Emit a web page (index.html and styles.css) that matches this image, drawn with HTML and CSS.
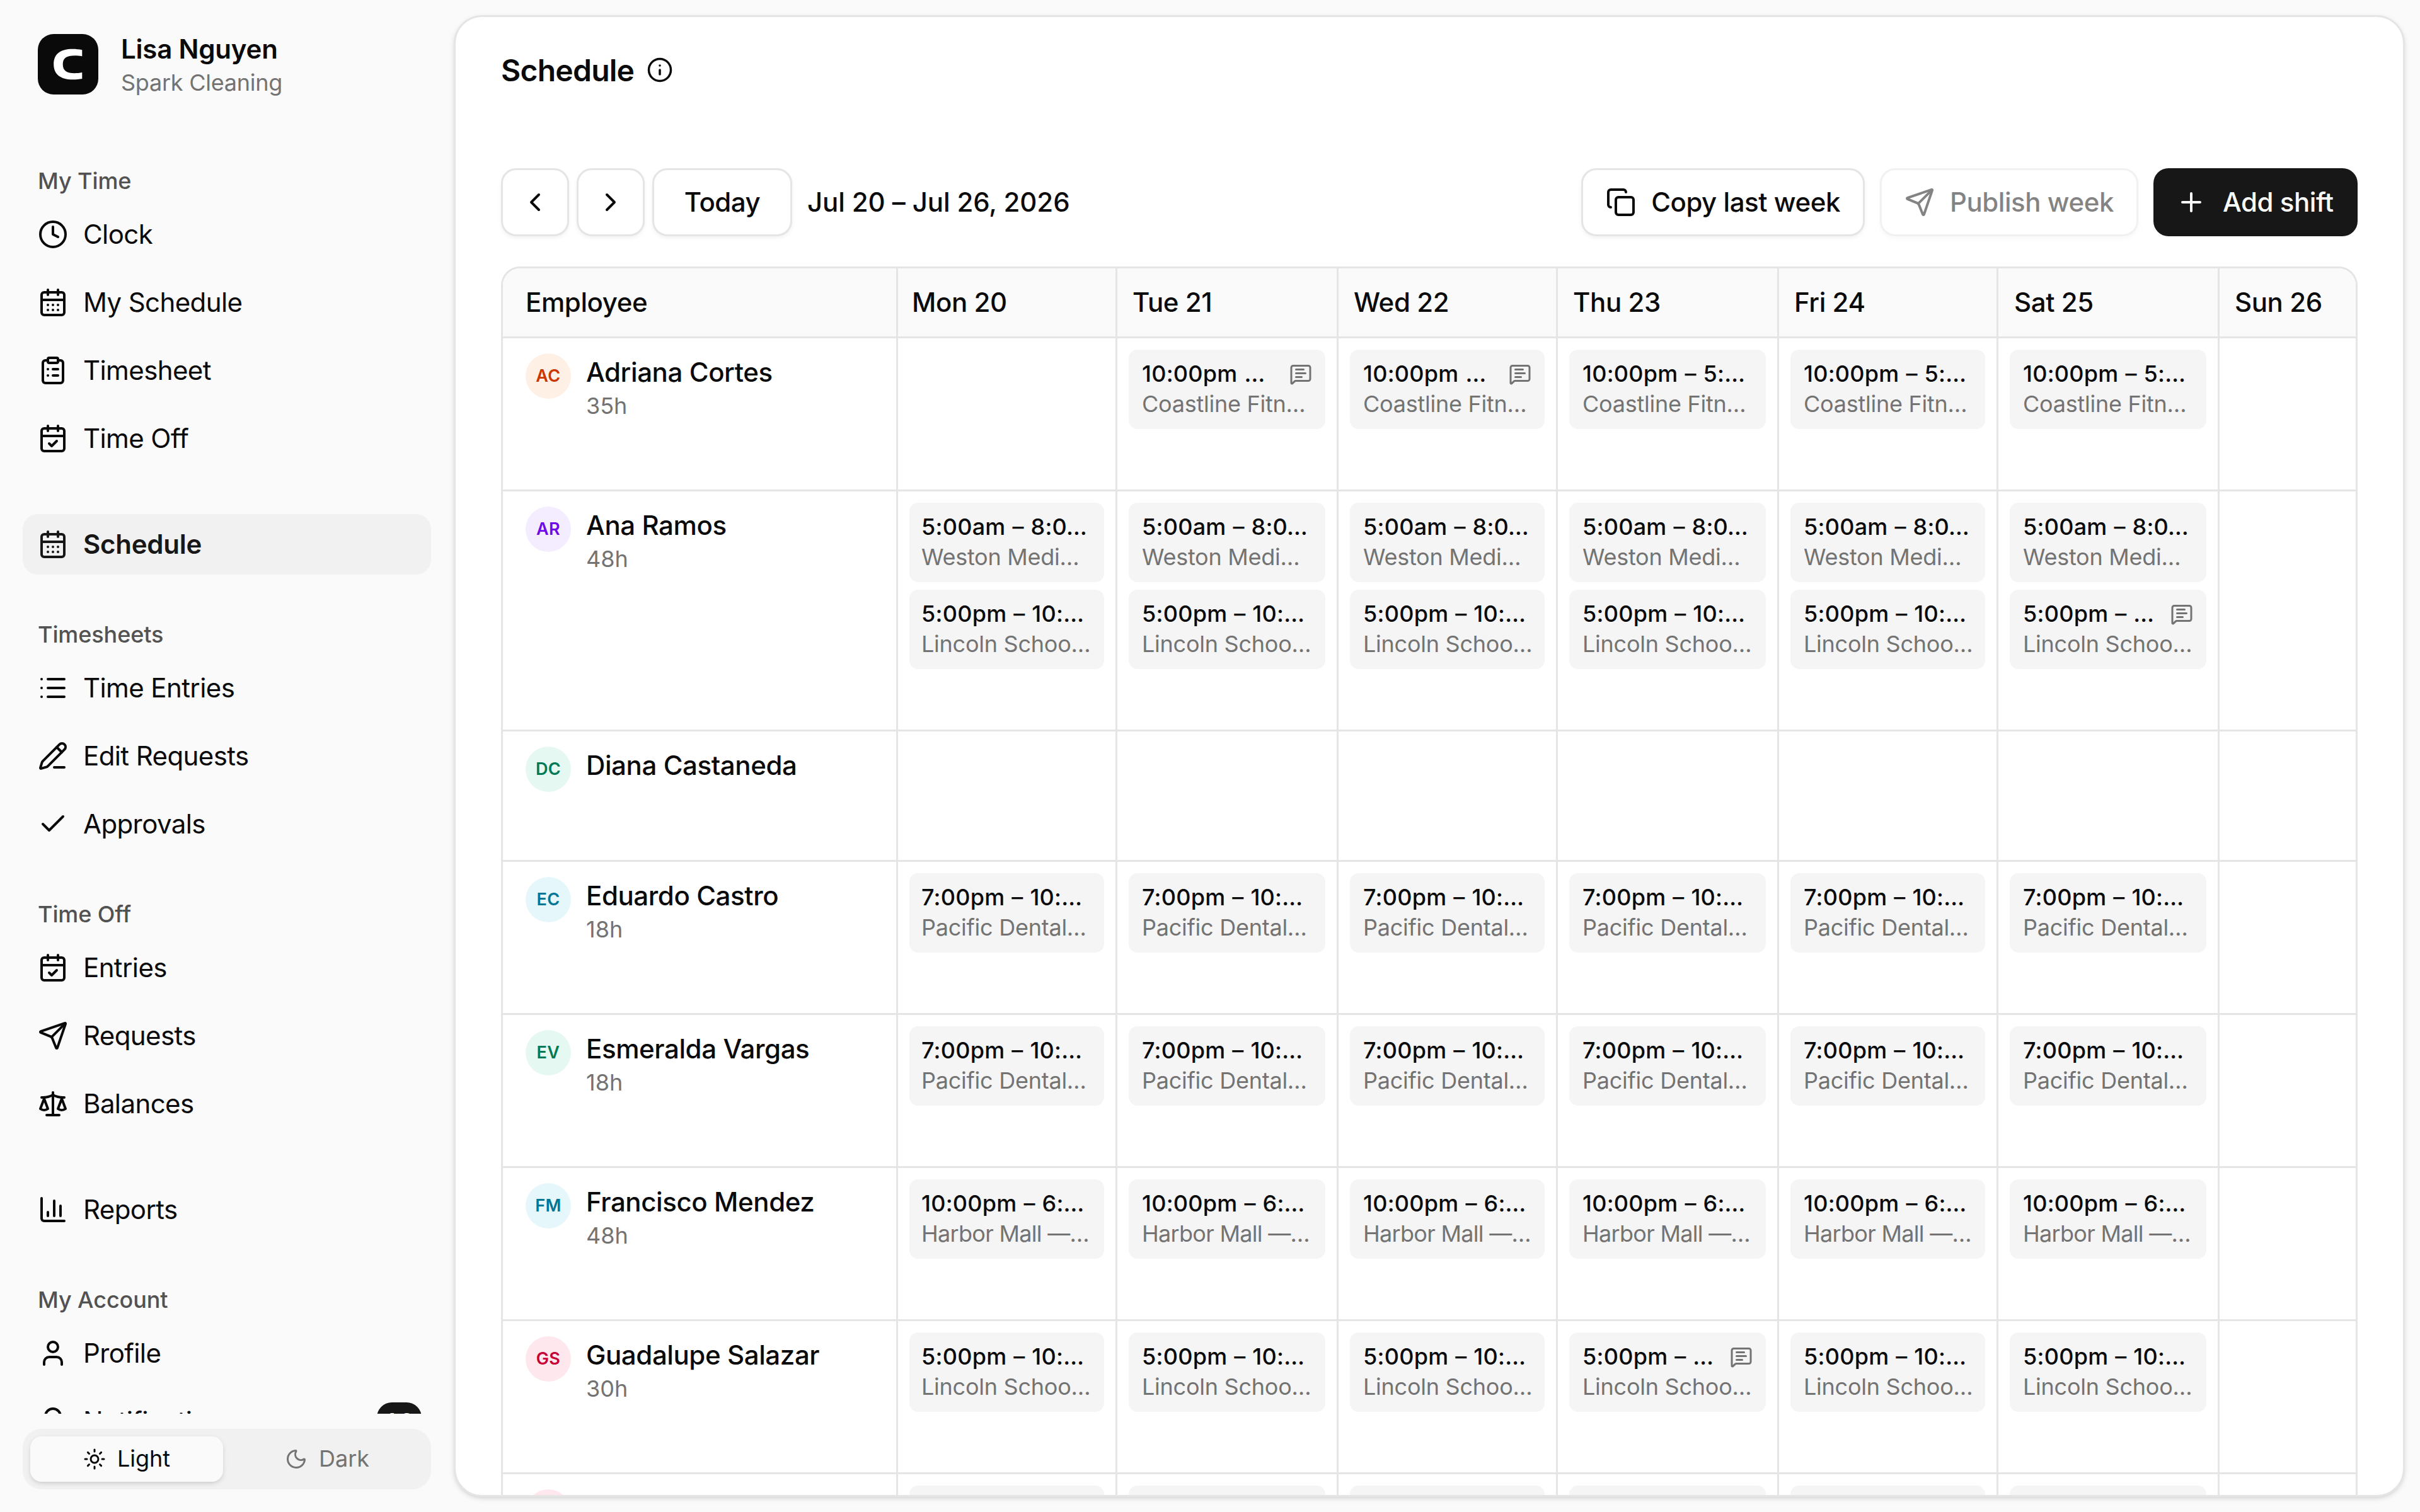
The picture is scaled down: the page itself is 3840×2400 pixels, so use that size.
FILE: index.html
```html
<!DOCTYPE html>
<html lang="en">
<head>
<meta charset="utf-8">
<title>Schedule</title>
<link rel="stylesheet" href="styles.css">
</head>
<body>
<svg class="sprite" aria-hidden="true">
  <symbol id="clock" viewBox="0 0 24 24"><circle cx="12" cy="12" r="10"/><path d="M12 6v6l4 2"/></symbol>
  <symbol id="calendar-days" viewBox="0 0 24 24"><path d="M8 2v4M16 2v4"/><rect width="18" height="18" x="3" y="4" rx="2"/><path d="M3 10h18M8 14h.01M12 14h.01M16 14h.01M8 18h.01M12 18h.01M16 18h.01"/></symbol>
  <symbol id="clipboard-list" viewBox="0 0 24 24"><rect width="8" height="4" x="8" y="2" rx="1" ry="1"/><path d="M16 4h2a2 2 0 0 1 2 2v14a2 2 0 0 1-2 2H6a2 2 0 0 1-2-2V6a2 2 0 0 1 2-2h2M12 11h4M12 16h4M8 11h.01M8 16h.01"/></symbol>
  <symbol id="calendar-check" viewBox="0 0 24 24"><path d="M8 2v4M16 2v4"/><rect width="18" height="18" x="3" y="4" rx="2"/><path d="M3 10h18M9 16l2 2 4-4"/></symbol>
  <symbol id="list" viewBox="0 0 24 24"><path d="M3 5h.01M3 12h.01M3 19h.01M8 5h13M8 12h13M8 19h13"/></symbol>
  <symbol id="pen-line" viewBox="0 0 24 24"><path d="M13 21h8"/><path d="m15 5 4 4"/><path d="M21.174 6.812a1 1 0 0 0-3.986-3.987L3.842 16.174a2 2 0 0 0-.5.83l-1.321 4.352a.5.5 0 0 0 .623.622l4.353-1.32a2 2 0 0 0 .83-.497z"/></symbol>
  <symbol id="check" viewBox="0 0 24 24"><path d="M20 6 9 17l-5-5"/></symbol>
  <symbol id="send" viewBox="0 0 24 24"><path d="M14.536 21.686a.5.5 0 0 0 .937-.024l6.5-19a.496.496 0 0 0-.635-.635l-19 6.5a.5.5 0 0 0-.024.937l7.93 3.18a2 2 0 0 1 1.112 1.11z"/><path d="m21.854 2.147-10.94 10.939"/></symbol>
  <symbol id="scale" viewBox="0 0 24 24"><path d="M12 3v18"/><path d="m19 8 3 8a5 5 0 0 1-6 0zV7"/><path d="M3 7h1a17 17 0 0 0 8-2 17 17 0 0 0 8 2h1"/><path d="m5 8 3 8a5 5 0 0 1-6 0zV7"/><path d="M7 21h10"/></symbol>
  <symbol id="chart-column" viewBox="0 0 24 24"><path d="M3 3v16a2 2 0 0 0 2 2h16M18 17V9M13 17V5M8 17v-3"/></symbol>
  <symbol id="user" viewBox="0 0 24 24"><path d="M19 21v-2a4 4 0 0 0-4-4H9a4 4 0 0 0-4 4v2"/><circle cx="12" cy="7" r="4"/></symbol>
  <symbol id="bell" viewBox="0 0 24 24"><path d="M10.268 21a2 2 0 0 0 3.464 0"/><path d="M3.262 15.326A1 1 0 0 0 4 17h16a1 1 0 0 0 .74-1.673C19.41 13.956 18 12.499 18 8A6 6 0 0 0 6 8c0 4.499-1.411 5.956-2.738 7.326"/></symbol>
  <symbol id="sun" viewBox="0 0 24 24"><circle cx="12" cy="12" r="4"/><path d="M12 2v2M12 20v2M4.93 4.93l1.41 1.41M17.66 17.66l1.41 1.41M2 12h2M20 12h2M6.34 17.66l-1.41 1.41M19.07 4.93l-1.41 1.41"/></symbol>
  <symbol id="moon" viewBox="0 0 24 24"><path d="M20.985 12.486a9 9 0 1 1-9.473-9.472c.405-.022.617.46.402.803a6 6 0 0 0 8.268 8.268c.344-.215.825-.004.803.401"/></symbol>
  <symbol id="info" viewBox="0 0 24 24"><circle cx="12" cy="12" r="10"/><path d="M12 16v-4M12 8h.01"/></symbol>
  <symbol id="chevron-left" viewBox="0 0 24 24"><path d="m15 18-6-6 6-6"/></symbol>
  <symbol id="chevron-right" viewBox="0 0 24 24"><path d="m9 18 6-6-6-6"/></symbol>
  <symbol id="copy" viewBox="0 0 24 24"><rect width="14" height="14" x="8" y="8" rx="2" ry="2"/><path d="M4 16c-1.1 0-2-.9-2-2V4c0-1.1.9-2 2-2h10c1.1 0 2 .9 2 2"/></symbol>
  <symbol id="plus" viewBox="0 0 24 24"><path d="M5 12h14M12 5v14"/></symbol>
  <symbol id="note" viewBox="0 0 24 24"><path d="M22 17a2 2 0 0 1-2 2H6.828a2 2 0 0 0-1.414.586l-2.202 2.202A.71.71 0 0 1 2 21.286V5a2 2 0 0 1 2-2h16a2 2 0 0 1 2 2z"/><path d="M7 11h10M7 15h6M7 7h8"/></symbol>
</svg>

<div class="app">
  <aside class="sidebar">
    <div class="account">
      <svg class="logo" viewBox="0 0 96 96"><rect width="96" height="96" rx="25"/><path d="M70.3 25.2C65.500 24.200 60 23.700 55.500 23.700C36 23.700 25.200 31.500 25.200 48C25.200 64 36 72.300 55.500 72.300C60 72.300 65.500 71.800 70.300 70.900V61C66.500 61.800 62 62.200 58.500 62.200C46 62.200 39.700 58.500 39.700 48C39.700 37.800 46 34.200 58.500 34.200C62 34.200 66.500 34.500 70.300 35.200Z"/></svg>
      <div class="account-text">
        <div class="account-name">Lisa Nguyen</div>
        <div class="account-org">Spark Cleaning</div>
      </div>
    </div>

    <nav class="nav">
      <section class="group">
        <h2 class="group-label">My Time</h2>
        <a class="item"><svg class="icon"><use href="#clock"/></svg><span>Clock</span></a>
        <a class="item"><svg class="icon"><use href="#calendar-days"/></svg><span>My Schedule</span></a>
        <a class="item"><svg class="icon"><use href="#clipboard-list"/></svg><span>Timesheet</span></a>
        <a class="item"><svg class="icon"><use href="#calendar-check"/></svg><span>Time Off</span></a>
      </section>
      <section class="group">
        <a class="item active"><svg class="icon"><use href="#calendar-days"/></svg><span>Schedule</span></a>
      </section>
      <section class="group">
        <h2 class="group-label">Timesheets</h2>
        <a class="item"><svg class="icon"><use href="#list"/></svg><span>Time Entries</span></a>
        <a class="item"><svg class="icon"><use href="#pen-line"/></svg><span>Edit Requests</span></a>
        <a class="item"><svg class="icon"><use href="#check"/></svg><span>Approvals</span></a>
      </section>
      <section class="group">
        <h2 class="group-label">Time Off</h2>
        <a class="item"><svg class="icon"><use href="#calendar-check"/></svg><span>Entries</span></a>
        <a class="item"><svg class="icon"><use href="#send"/></svg><span>Requests</span></a>
        <a class="item"><svg class="icon"><use href="#scale"/></svg><span>Balances</span></a>
      </section>
      <section class="group">
        <a class="item"><svg class="icon"><use href="#chart-column"/></svg><span>Reports</span></a>
      </section>
      <section class="group">
        <h2 class="group-label">My Account</h2>
        <a class="item"><svg class="icon"><use href="#user"/></svg><span>Profile</span></a>
        <a class="item"><svg class="icon"><use href="#bell"/></svg><span>Notifications</span><span class="badge">10</span></a>
      </section>
    </nav>

    <div class="theme">
      <button class="theme-option selected"><svg class="icon"><use href="#sun"/></svg><span>Light</span></button>
      <button class="theme-option"><svg class="icon"><use href="#moon"/></svg><span>Dark</span></button>
    </div>
  </aside>

  <main class="card">
    <header class="page-header">
      <h1 class="title">Schedule</h1>
      <svg class="icon info"><use href="#info"/></svg>
    </header>

    <div class="content">
      <div class="toolbar">
        <button class="btn square"><svg class="icon"><use href="#chevron-left"/></svg></button>
        <button class="btn square"><svg class="icon"><use href="#chevron-right"/></svg></button>
        <button class="btn today">Today</button>
        <div class="range">Jul 20 – Jul 26, 2026</div>
        <div class="actions">
          <button class="btn"><svg class="icon"><use href="#copy"/></svg>Copy last week</button>
          <button class="btn disabled"><svg class="icon"><use href="#send"/></svg>Publish week</button>
          <button class="btn primary"><svg class="icon"><use href="#plus"/></svg>Add shift</button>
        </div>
      </div>

      <div class="board" id="board">
        <div class="row head">
          <div class="cell">Employee</div>
          <div class="cell">Mon 20</div>
          <div class="cell">Tue 21</div>
          <div class="cell">Wed 22</div>
          <div class="cell">Thu 23</div>
          <div class="cell">Fri 24</div>
          <div class="cell">Sat 25</div>
          <div class="cell">Sun 26</div>
        </div>
      </div>
    </div>
  </main>
</div>
<script src="schedule.js"></script>
</body>
</html>
```
FILE: styles.css
```css
* { box-sizing: border-box; }

body {
  margin: 0;
  background: #fafafa;
  color: #0a0a0a;
  font: 400 42px/60px Inter, "Liberation Sans", sans-serif;
}

h1, h2 { margin: 0; }

button { font: inherit; color: inherit; border: 0; background: none; padding: 0; }

.sprite { display: none; }

.icon {
  width: 48px;
  height: 48px;
  flex: none;
  fill: none;
  stroke: currentColor;
  stroke-width: 2;
  stroke-linecap: round;
  stroke-linejoin: round;
}

.app {
  display: flex;
  width: 3840px;
  height: 2400px;
  overflow: hidden;
}

/* Sidebar */

.sidebar {
  width: 720px;
  padding: 54px 36px 36px;
  display: flex;
  flex-direction: column;
}

.account {
  display: flex;
  gap: 36px;
  height: 96px;
  padding-left: 24px;
  flex: none;
}

.logo { width: 96px; height: 96px; flex: none; fill: #0a0a0a; }
.logo path { fill: #fff; }

.account-name {
  margin-top: -2px;
  font-weight: 600;
  line-height: 51px;
  letter-spacing: -0.2px;
}

.account-org {
  margin-top: 4px;
  font-size: 36px;
  line-height: 48px;
  letter-spacing: -0.25px;
  color: #737373;
}

.nav {
  display: flex;
  flex-direction: column;
  gap: 72px;
  height: 1980px;
  margin: 114px 0 24px;
  overflow: hidden;
  flex: none;
}

.group { display: flex; flex-direction: column; gap: 12px; }

.group-label {
  height: 48px;
  padding: 0 24px;
  font-size: 36px;
  font-weight: 500;
  line-height: 46px;
  letter-spacing: -0.1px;
  color: #525252;
}

.item {
  display: flex;
  align-items: center;
  gap: 24px;
  height: 96px;
  padding: 0 15px 0 24px;
  border-radius: 24px;
  letter-spacing: -0.6px;
}

.item.active {
  background: #f1f1f1;
  color: #171717;
  font-weight: 600;
  letter-spacing: -0.25px;
}

.badge {
  margin-left: auto;
  height: 60px;
  padding: 0 12px;
  border-radius: 24px;
  background: #171717;
  color: #fafafa;
  font-size: 36px;
  font-weight: 500;
  font-variant-numeric: tabular-nums;
  line-height: 60px;
  letter-spacing: 0;
}

.theme {
  display: flex;
  gap: 12px;
  height: 96px;
  padding: 12px;
  border-radius: 30px;
  background: #f1f1f1;
  flex: none;
}

.theme-option {
  flex: 1;
  display: flex;
  align-items: center;
  justify-content: center;
  gap: 18px;
  border-radius: 18px;
  font-size: 36px;
  line-height: 48px;
  color: #737373;
}

.theme-option span { padding-bottom: 2px; }

.theme-option.selected {
  background: #fafafa;
  color: #0a0a0a;
  box-shadow: 0 3px 9px rgba(0, 0, 0, 0.1), 0 3px 6px -3px rgba(0, 0, 0, 0.1);
}

.theme-option .icon { width: 36px; height: 36px; }

/* Main card */

.card {
  width: 3096px;
  height: 2352px;
  margin-top: 24px;
  border: 3px solid #e5e5e5;
  border-radius: 45px;
  background: #fff;
  box-shadow: 0 3px 9px rgba(0, 0, 0, 0.1), 0 3px 6px -3px rgba(0, 0, 0, 0.1);
  overflow: hidden;
  flex: none;
}

.page-header {
  display: flex;
  align-items: center;
  gap: 20px;
  height: 168px;
  padding: 0 72px;
}

.title {
  padding-top: 2px;
  font-size: 48px;
  font-weight: 600;
  line-height: 72px;
  letter-spacing: -0.75px;
}

.info { width: 42px; height: 42px; }

.content { padding: 72px 72px 0; }

.toolbar { display: flex; align-items: center; gap: 12px; height: 108px; }

.btn {
  display: flex;
  align-items: center;
  justify-content: center;
  gap: 24px;
  height: 108px;
  padding: 0 36px;
  border: 3px solid #e5e5e5;
  border-radius: 24px;
  background: #fff;
  font-weight: 500;
  letter-spacing: -0.45px;
  white-space: nowrap;
  box-shadow: 0 3px 6px rgba(0, 0, 0, 0.05);
}

.btn.square { width: 108px; padding: 0; }
.btn.today { width: 222px; padding: 0; }
.btn.disabled { opacity: 0.5; }

.btn.primary {
  justify-content: flex-start;
  gap: 26px;
  width: 324px;
  border: 0;
  background: #171717;
  color: #fafafa;
  box-shadow: none;
}

.range {
  margin-left: 12px;
  font-weight: 500;
  letter-spacing: -0.1px;
  white-space: nowrap;
}

.actions { display: flex; gap: 24px; margin-left: auto; }

/* Schedule board */

.board {
  border: 3px solid #e5e5e5;
  border-radius: 30px;
  margin-top: 48px;
  overflow: hidden;
}

.row {
  display: grid;
  grid-template-columns: 627px 348px 351px 348px 351px 348px 351px 216px;
  border-bottom: 3px solid #e5e5e5;
}

.cell {
  display: flex;
  flex-direction: column;
  gap: 12px;
  min-height: 204px;
  padding: 18px 18px 96px;
  border-right: 3px solid #e5e5e5;
}

.cell:last-child { border-right: 0; }

.head { background: #fafafa; font-weight: 500; letter-spacing: -0.4px; }
.head .cell { min-height: 0; padding: 24px; }
.head .cell:first-child { padding-left: 36px; }
.head .cell:nth-child(2) { padding-left: 22px; }
.head .cell:nth-child(7) { padding-left: 25px; }

.employee {
  flex-direction: row;
  gap: 24px;
  padding: 24px 36px 0;
}

.avatar {
  width: 72px;
  height: 72px;
  border-radius: 50%;
  font-size: 27px;
  font-weight: 600;
  line-height: 72px;
  letter-spacing: 0.4px;
  text-align: center;
  flex: none;
}

.orange { background: #fff0e5; color: #ca3500; }
.violet { background: #f3edff; color: #7008e7; }
.emerald { background: #e5f8f1; color: #007a55; }
.cyan { background: #e5f7fb; color: #007595; }
.rose { background: #ffe8ed; color: #c70036; }

.name { font-weight: 500; letter-spacing: -0.4px; }

.hours {
  margin-top: -1px;
  font-size: 36px;
  line-height: 48px;
  color: #737373;
}

.shift {
  height: 126px;
  padding: 14px 21px 16px;
  border-radius: 14px;
  background: #f5f5f5;
  font-size: 36px;
  line-height: 48px;
  white-space: nowrap;
}

.cell:nth-child(2) .shift { padding-left: 19px; }

.shift-time {
  display: flex;
  align-items: center;
  justify-content: space-between;
  height: 48px;
  font-weight: 500;
  letter-spacing: 0.25px;
  word-spacing: 1px;
}

.shift-time .icon { width: 36px; height: 36px; color: #737373; position: relative; top: 1px; }
.shift-site { letter-spacing: -0.25px; color: #737373; }
.shift-site.tight { letter-spacing: -0.7px; }
```
FILE: schedule.js
```javascript
// Each employee has the shifts of one working day, the days they are worked
// (0 = Monday) and the days on which a shift carries a note.
const employees = [
  { initials: 'AC', name: 'Adriana Cortes', hours: '35h', tone: 'orange', days: [1, 2, 3, 4, 5],
    shifts: [{ time: '10:00pm – 5:…', site: 'Coastline Fitn…', noted: '10:00pm …', notes: [1, 2] }] },
  { initials: 'AR', name: 'Ana Ramos', hours: '48h', tone: 'violet', days: [0, 1, 2, 3, 4, 5],
    shifts: [{ time: '5:00am – 8:0…', site: 'Weston Medi…' },
             { time: '5:00pm – 10:…', site: 'Lincoln Schoo…', noted: '5:00pm – …', notes: [5] }] },
  { initials: 'DC', name: 'Diana Castaneda', hours: '', tone: 'emerald', days: [], shifts: [] },
  { initials: 'EC', name: 'Eduardo Castro', hours: '18h', tone: 'cyan', days: [0, 1, 2, 3, 4, 5],
    shifts: [{ time: '7:00pm – 10:…', site: 'Pacific Dental…' }] },
  { initials: 'EV', name: 'Esmeralda Vargas', hours: '18h', tone: 'emerald', days: [0, 1, 2, 3, 4, 5],
    shifts: [{ time: '7:00pm – 10:…', site: 'Pacific Dental…' }] },
  { initials: 'FM', name: 'Francisco Mendez', hours: '48h', tone: 'cyan', days: [0, 1, 2, 3, 4, 5],
    shifts: [{ time: '10:00pm – 6:…', site: 'Harbor Mall —…', tight: true }] },
  { initials: 'GS', name: 'Guadalupe Salazar', hours: '30h', tone: 'rose', days: [0, 1, 2, 3, 4, 5],
    shifts: [{ time: '5:00pm – 10:…', site: 'Lincoln Schoo…', noted: '5:00pm – …', notes: [3] }] },
  { initials: '', name: '', hours: '', tone: 'rose', days: [0, 1, 2, 3, 4, 5],
    shifts: [{ time: '', site: '' }] },
];

const noteIcon = '<svg class="icon"><use href="#note"/></svg>';

function shiftCard(shift, day) {
  const hasNote = (shift.notes || []).includes(day);
  return `<div class="shift">
    <div class="shift-time"><span>${hasNote ? shift.noted : shift.time}</span>${hasNote ? noteIcon : ''}</div>
    <div class="shift-site${shift.tight ? ' tight' : ''}">${shift.site}</div>
  </div>`;
}

function employeeRow(e) {
  const cells = [0, 1, 2, 3, 4, 5, 6].map((day) =>
    `<div class="cell">${e.days.includes(day) ? e.shifts.map((s) => shiftCard(s, day)).join('') : ''}</div>`);
  return `<div class="row">
    <div class="cell employee">
      <div class="avatar ${e.tone}">${e.initials}</div>
      <div><div class="name">${e.name}</div><div class="hours">${e.hours}</div></div>
    </div>${cells.join('')}
  </div>`;
}

document.getElementById('board').insertAdjacentHTML('beforeend', employees.map(employeeRow).join(''));
```
